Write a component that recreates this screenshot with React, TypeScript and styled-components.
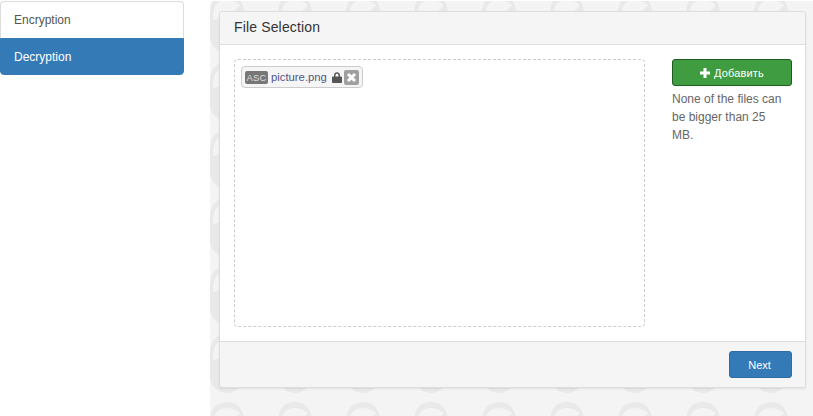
import React from "react";
import styled, { createGlobalStyle } from "styled-components";

const lockTile = encodeURIComponent(
  `<svg xmlns="http://www.w3.org/2000/svg" width="68" height="68"><path fill="#e9e9e9" fill-rule="evenodd" d="M17 0C27 0 33.500 7 33.800 17C34 24 34 32 34 42C34 52 26 59 17 59C8 59 0 52 0 42C0 32 0 24 .2 17C.5 7 7 0 17 0ZM17 6C10.500 6 6 9 4.500 14C3.200 18 3 22 3 26C13 24 24 19 30 11C26 7.500 21 6 17 6Z"/></svg>`
);

const GlobalStyle = createGlobalStyle`
  html, body { margin: 0; padding: 0; background: #fff; }
  body { font-family: "Liberation Sans", Arial, sans-serif; font-size: 12px; color: #333; }
`;

const Page = styled.div`
  display: flex;
  align-items: flex-start;
  width: 813px;
  height: 416px;
  overflow: hidden;
`;

const Sidebar = styled.nav`
  flex: none;
  width: 184px;
  margin-top: 1px;
  margin-right: 26px;
  display: flex;
  flex-direction: column;
`;

const NavItem = styled.a<{ $active?: boolean }>`
  box-sizing: border-box;
  height: 37px;
  padding-left: 13px;
  display: flex;
  align-items: center;
  font-size: 12px;
  color: ${(p) => (p.$active ? "#fff" : "#555")};
  background: ${(p) => (p.$active ? "#337ab7" : "#fff")};
  border: 1px solid ${(p) => (p.$active ? "#337ab7" : "#ddd")};
  border-bottom-width: ${(p) => (p.$active ? "1px" : "0")};
  border-radius: ${(p) => (p.$active ? "0 0 4px 4px" : "4px 4px 0 0")};
`;

const Main = styled.main`
  box-sizing: border-box;
  flex: 1;
  height: 416px;
  padding: 10px 8px 0 9px;
  margin-top: 1px;
  border-radius: 4px 0 0 0;
  background-color: #f4f4f4;
  background-image: url("data:image/svg+xml,${lockTile}");
  background-position: 0 -7px;
`;

const Panel = styled.section`
  box-sizing: border-box;
  height: 377px;
  display: flex;
  flex-direction: column;
  background: #fff;
  border: 1px solid #ddd;
  border-radius: 3px;
  box-shadow: 0 1px 2px rgba(0, 0, 0, 0.08);
`;

const PanelHeading = styled.header`
  box-sizing: border-box;
  flex: none;
  height: 33px;
  padding: 0 14px 2px;
  display: flex;
  align-items: center;
  background: #f5f5f5;
  border-bottom: 1px solid #ddd;
  border-radius: 3px 3px 0 0;
  font-size: 14px;
  letter-spacing: 0.15px;
  color: #333;
`;

const PanelBody = styled.div`
  flex: 1;
  min-height: 0;
  padding: 14px 13px 14px 14px;
  display: flex;
  align-items: stretch;
`;

const DropZone = styled.div`
  box-sizing: border-box;
  flex: none;
  width: 411px;
  padding: 6px;
  display: flex;
  align-items: flex-start;
  border: 1px dashed #ccc;
  border-radius: 4px;
`;

const FileChip = styled.div`
  box-sizing: border-box;
  width: 122px;
  height: 22px;
  padding: 0 3px;
  display: flex;
  align-items: center;
  background: #f5f5f5;
  border: 1px solid #ccc;
  border-radius: 4px;
`;

const TypeBadge = styled.span`
  box-sizing: border-box;
  flex: none;
  width: 23px;
  height: 13px;
  margin-right: 3px;
  display: flex;
  align-items: center;
  justify-content: center;
  background: #777;
  border-radius: 2px;
  color: #ddd;
  font-size: 9.5px;
  letter-spacing: 0.2px;
`;

const FileName = styled.span`
  flex: none;
  width: 56px;
  font-size: 11.3px;
  color: #50558a;
  white-space: nowrap;
`;

const LockGlyph = styled.svg`
  flex: none;
  width: 10px;
  height: 11px;
  margin-left: 5px;
  margin-right: 2px;
  color: #555;
`;

const RemoveBox = styled.span`
  flex: none;
  width: 15px;
  height: 15px;
  display: flex;
  align-items: center;
  justify-content: center;
  background: #a0a0a0;
  border-radius: 2px;
`;

const SideColumn = styled.aside`
  flex: none;
  width: 120px;
  margin-left: 27px;
`;

const AddButton = styled.button`
  box-sizing: border-box;
  width: 120px;
  height: 27px;
  display: flex;
  align-items: center;
  justify-content: center;
  gap: 4px;
  padding: 0;
  background: #409c41;
  border: 1px solid #1f5c20;
  border-radius: 3px;
  color: #fff;
  font: 11px "Liberation Sans", Arial, sans-serif;
  letter-spacing: 0.15px;
`;

const Hint = styled.p`
  margin: 4px 0 0;
  width: 114px;
  font-size: 12px;
  line-height: 18px;
  color: #666;
`;

const PanelFooter = styled.footer`
  box-sizing: border-box;
  flex: none;
  height: 46px;
  padding: 9px 13px 0 0;
  display: flex;
  justify-content: flex-end;
  align-items: flex-start;
  background: #f5f5f5;
  border-top: 1px solid #ddd;
  border-radius: 0 0 3px 3px;
`;

const NextButton = styled.button`
  box-sizing: border-box;
  width: 63px;
  height: 27px;
  padding: 0 2px 0 0;
  background: #337ab7;
  border: 1px solid #2e6da4;
  border-radius: 3px;
  color: #fff;
  font: 11px "Liberation Sans", Arial, sans-serif;
`;

export default function App() {
  return (
    <>
      <GlobalStyle />
      <Page>
        <Sidebar>
          <NavItem>Encryption</NavItem>
          <NavItem $active>Decryption</NavItem>
        </Sidebar>
        <Main>
          <Panel>
            <PanelHeading>File Selection</PanelHeading>
            <PanelBody>
              <DropZone>
                <FileChip>
                  <TypeBadge>ASC</TypeBadge>
                  <FileName>picture.png</FileName>
                  <LockGlyph viewBox="0 0 10 11">
                    <path
                      fill="currentColor"
                      fillRule="evenodd"
                      d="M2 4.500V3.200C2 1.400 3.300.3 5 .3S8 1.400 8 3.200V4.500H9C9.500 4.500 10 4.900 10 5.500V10C10 10.600 9.500 11 9 11H1C.5 11 0 10.600 0 10V5.500C0 4.900.5 4.500 1 4.500ZM3.500 4.500H6.500V3.200C6.500 2.300 5.900 1.700 5 1.700S3.500 2.300 3.500 3.200Z"
                    />
                  </LockGlyph>
                  <RemoveBox>
                    <svg width="11" height="11" viewBox="0 0 11 11">
                      <path d="M2 2L9 9M9 2L2 9" stroke="#fff" strokeWidth="3" fill="none" />
                    </svg>
                  </RemoveBox>
                </FileChip>
              </DropZone>
              <SideColumn>
                <AddButton>
                  <svg width="10" height="10" viewBox="0 0 10 10">
                    <path d="M3.500 0H6.500V3.500H10V6.500H6.500V10H3.500V6.500H0V3.500H3.500Z" fill="#fff" />
                  </svg>
                  Добавить
                </AddButton>
                <Hint>None of the files can be bigger than 25 MB.</Hint>
              </SideColumn>
            </PanelBody>
            <PanelFooter>
              <NextButton>Next</NextButton>
            </PanelFooter>
          </Panel>
        </Main>
      </Page>
    </>
  );
}
